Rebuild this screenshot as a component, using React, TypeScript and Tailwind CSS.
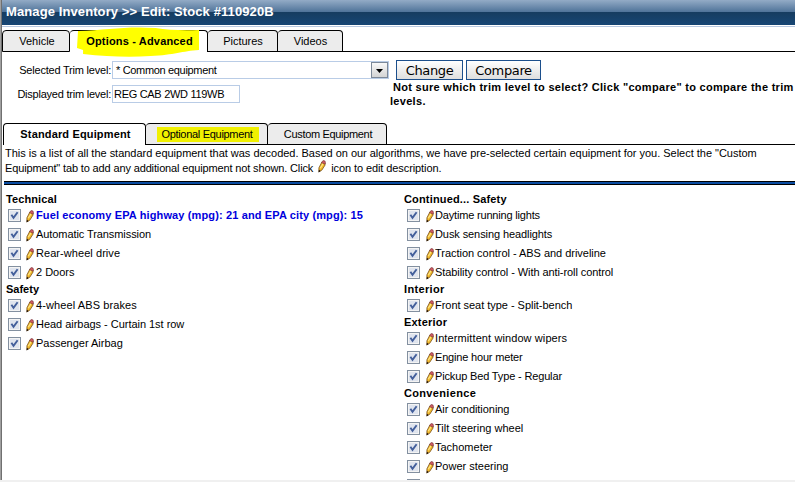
import type { ReactNode } from "react";

function Pencil() {
  return (
    <svg width="8" height="13" viewBox="0 0 8 13" className="block shrink-0">
      <path d="M0.9 11.9 L0.9 7.8 L4 1.8 L7.2 3 L7 5.2 L3.8 10.2 Z" fill="#f0b82a" stroke="#6a4418" strokeWidth="0.7" />
      <path d="M4 1.9 L5 0.5 L7 0.9 L7.5 2.6 L6.9 4.2 L3.6 2.8 Z" fill="#cc5a62" stroke="#6a2a30" strokeWidth="0.5" />
      <path d="M2.3 8.2 L4.9 3.9" stroke="#ffe88a" strokeWidth="1.1" />
      <path d="M0.5 12.5 L0.9 9.8 L2.6 10.9 Z" fill="#1c1008" />
    </svg>
  );
}

function Box() {
  return (
    <span className="block h-[13px] w-[13px] shrink-0 border border-[#8390a0] bg-[#f4f4f4] p-px">
      <svg width="9" height="9" viewBox="0 0 9 9" className="block bg-[#dfe4ee]">
        <path d="M1.4 3.8 L3.5 6.8 L7.6 1.2" fill="none" stroke="#435f9b" strokeWidth="1.9" />
      </svg>
    </span>
  );
}

function Heading({ children, className = "" }: { children: ReactNode; className?: string }) {
  return <div className={`h-[14px] pt-px text-[11px] leading-[13px] font-bold whitespace-nowrap ${className}`}>{children}</div>;
}

function Row({ text, right, className = "" }: { text: string; right?: boolean; className?: string }) {
  return (
    <div className="flex h-[19px] items-start pt-[3px] pl-[3px]">
      <Box />
      <span className={right ? "mt-px mr-px ml-[6px]" : "mt-px mr-[2px] ml-[5px]"}>
        <Pencil />
      </span>
      <span className={`text-[11px] leading-[13px] whitespace-nowrap ${className}`}>{text}</span>
    </div>
  );
}

function Tab({ children, className = "", active }: { children: ReactNode; className?: string; active?: boolean }) {
  return (
    <div
      className={`flex h-[22px] shrink-0 items-center justify-center rounded-t-[4px] border-t border-r border-black text-[11px] leading-[13px] whitespace-nowrap ${
        active ? "bg-white font-bold" : "border-b bg-[#ececec]"
      } ${className}`}
    >
      {children}
    </div>
  );
}

export default function App() {
  return (
    <div className="flex h-[482px] w-[795px] flex-col overflow-hidden bg-white font-['Liberation_Sans',Arial,sans-serif] text-black">
      <div className="flex h-[480px] shrink-0 overflow-hidden">
        <div className="w-[2px] shrink-0 border-l border-[#a0a0a0] bg-[#707070]" />
        <div className="w-[793px] shrink-0">
          <div className="flex h-[25px] w-full items-center bg-[linear-gradient(to_bottom,#93abc6_0px,#4f7399_12px,#163c60_12px,#174674_25px)] pl-[4px] text-[13px] leading-[16px] font-bold whitespace-nowrap text-white">
            <span className="-mt-px tracking-[0.1px]">Manage Inventory &gt;&gt; Edit: Stock #110920B</span>
          </div>
          <div className="mt-px h-px bg-[#b8c8e0]" />

          <div className="mt-[3px] flex h-[22px]">
            <Tab className="w-[68px] border-l pl-[2px]">Vehicle</Tab>
            <Tab active className="w-[138px] pl-[2px]">
              <span className="relative">
                <svg className="absolute -top-[9px] -left-[9px]" width="123" height="32" viewBox="0 0 122 32" preserveAspectRatio="none">
                  <path d="M1 5 C30 4 48 0 78 2 Q96 5 121 4 L121 24 C104 25 97 29 73 30 Q42 32 6 28 L6 24 L0 22 Z" fill="#ffff00" />
                </svg>
                <span className="relative tracking-[0.17px]">Options - Advanced</span>
              </span>
            </Tab>
            <Tab className="w-[70px] pl-px">Pictures</Tab>
            <Tab className="w-[65px] pl-px">Videos</Tab>
            <div className="grow border-b border-black" />
          </div>

          <div className="flex h-[71px] pt-[8px]">
            <div className="w-[388px] shrink-0">
              <div className="flex h-[24px] items-start">
                <div className="w-[110px] shrink-0 pt-[4px] pr-px text-right text-[11px] leading-[13px] tracking-[-0.21px] whitespace-nowrap">Selected Trim level:</div>
                <div className="mt-px flex h-[18px] w-[277px] justify-between border border-[#b9cce6] pl-[3px] text-[11px] leading-[16px]">
                  <span className="tracking-[-0.33px]">* Common equipment</span>
                  <span className="flex h-[16px] w-[17px] items-center justify-center border border-[#7c8898] bg-linear-to-b from-[#f8f8f8] to-[#d4d4d4]">
                    <svg width="7" height="4" viewBox="0 0 7 4" className="mt-[2px]"><path d="M0 0h7L3.500 4z" fill="#000" /></svg>
                  </span>
                </div>
              </div>
              <div className="flex h-[20px] items-start pt-px">
                <div className="w-[110px] shrink-0 pt-[3px] pr-px text-right text-[11px] leading-[13px] tracking-[-0.23px] whitespace-nowrap">Displayed trim level:</div>
                <div className="h-[18px] w-[128px] border border-[#b9cce6] pl-px text-[11px] leading-[17px] tracking-[-0.3px] whitespace-nowrap">REG CAB 2WD 119WB</div>
              </div>
            </div>
            <div className="w-[405px]">
              <div className="flex gap-[3px] pl-[6px] font-['DejaVu_Sans',Verdana,sans-serif] text-[13px] leading-[19px] tracking-[-0.35px]">
                <div className="h-[20px] w-[67px] border border-[#1c4f8c] bg-linear-to-b from-white to-[#dedede] text-center">Change</div>
                <div className="h-[20px] w-[75px] border border-[#1c4f8c] bg-linear-to-b from-white to-[#dedede] text-center">Compare</div>
              </div>
              <div className="text-[11px] leading-[14px] font-bold whitespace-nowrap">
                <div className="pl-[3px] tracking-[0.3px]">Not sure which trim level to select? Click "compare" to compare the trim</div>
                <div className="tracking-[0.3px]">levels.</div>
              </div>
            </div>
          </div>

          <div className="flex h-[22px] pl-px">
            <Tab active className="w-[143px] border-l pl-[2px] tracking-[0.15px]">Standard Equipment</Tab>
            <Tab className="w-[122px] pl-[3px] tracking-[-0.3px]">
              <span className="bg-[#f0f000] pt-px pr-[6px] pb-px pl-[4px]">Optional Equipment</span>
            </Tab>
            <Tab className="w-[119px] pl-[2px] tracking-[-0.33px]">Custom Equipment</Tab>
            <div className="grow border-b border-black" />
          </div>

          <div className="h-[36px] pl-[3px] text-[11px] leading-[15px] whitespace-nowrap">
            <div className="h-[15px] pt-px leading-[14px] tracking-[-0.02px]">This is a list of all the standard equipment that was decoded. Based on our algorithms, we have pre-selected certain equipment for you. Select the "Custom</div>
            <div className="flex h-[15px]">
              <span className="pt-px tracking-[-0.14px]">Equipment" tab to add any additional equipment not shown. Click</span>
              <span className="ml-[5px]"><Pencil /></span>
              <span className="ml-[5px] pt-px tracking-[-0.09px]">icon to edit description.</span>
            </div>
          </div>
          <div className="ml-[2px] h-[4px] border-y border-black bg-[#0b4da2]" />

          <div className="mt-[7px] flex pl-[3px]">
            <div className="w-[399px] shrink-0">
              <Heading className="pl-px tracking-[0.1px]">Technical</Heading>
              <Row text="Fuel economy EPA highway (mpg): 21 and EPA city (mpg): 15" className="font-bold tracking-[0.13px] text-[#0000dc]" />
              <Row text="Automatic Transmission" className="tracking-[-0.08px]" />
              <Row text="Rear-wheel drive" className="tracking-[0.06px]" />
              <Row text="2 Doors" />
              <Heading className="pl-px">Safety</Heading>
              <Row text="4-wheel ABS brakes" className="tracking-[0.1px]" />
              <Row text="Head airbags - Curtain 1st row" className="tracking-[-0.03px]" />
              <Row text="Passenger Airbag" />
            </div>
            <div>
              <Heading className="tracking-[0.16px]">Continued... Safety</Heading>
              <Row right text="Daytime running lights" className="tracking-[-0.18px]" />
              <Row right text="Dusk sensing headlights" className="tracking-[-0.09px]" />
              <Row right text="Traction control - ABS and driveline" className="tracking-[-0.03px]" />
              <Row right text="Stability control - With anti-roll control" className="tracking-[-0.08px]" />
              <Heading className="tracking-[0.35px]">Interior</Heading>
              <Row right text="Front seat type - Split-bench" className="tracking-[-0.03px]" />
              <Heading className="tracking-[0.2px]">Exterior</Heading>
              <Row right text="Intermittent window wipers" className="tracking-[0.1px]" />
              <Row right text="Engine hour meter" className="tracking-[-0.18px]" />
              <Row right text="Pickup Bed Type - Regular" className="tracking-[-0.15px]" />
              <Heading className="tracking-[0.33px]">Convenience</Heading>
              <Row right text="Air conditioning" className="tracking-[-0.05px]" />
              <Row right text="Tilt steering wheel" />
              <Row right text="Tachometer" />
              <Row right text="Power steering" />
              <Row right text="" />
            </div>
          </div>
        </div>
      </div>
      <div className="h-[2px] bg-[#f0f0f0]" />
    </div>
  );
}
